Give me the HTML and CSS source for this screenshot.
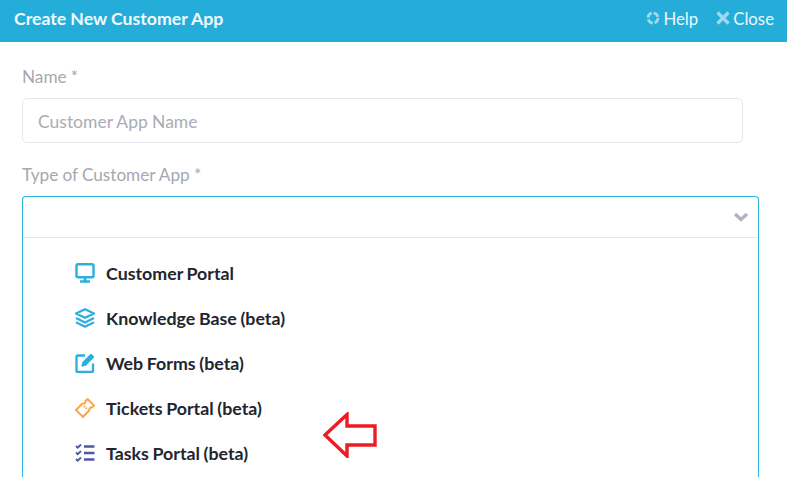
FILE: index.html
```html
<!DOCTYPE html>
<html lang="en">
<head>
<meta charset="utf-8">
<title>Create New Customer App</title>
<link rel="stylesheet" href="styles.css">
</head>
<body>
<div class="modal">
  <header class="bar">
    <h1 class="bar-title">Create New Customer App</h1>
    <div class="bar-actions">
      <span class="bar-action">
        <svg class="bar-icon" viewBox="0 0 14 14"><circle cx="7" cy="7" r="5" fill="none" stroke="#9fd9ee" stroke-width="2.8" stroke-dasharray="6 1.850"/></svg>Help</span>
      <span class="bar-action">
        <svg class="bar-icon" viewBox="0 0 14 14"><path d="M1.500 1.500l11 11M12.500 1.500l-11 11" fill="none" stroke="#9fd9ee" stroke-width="3.200"/></svg>Close</span>
    </div>
  </header>
  <main class="body">
    <label class="label">Name *</label>
    <div class="input">Customer App Name</div>
    <label class="label label-type">Type of Customer App *</label>
    <div class="select">
      <div class="select-control">
        <svg class="chevron" viewBox="0 0 16 10"><path d="M2 2l6 5.500L14 2" fill="none" stroke="#b0b4c0" stroke-width="3.400"/></svg>
      </div>
      <ul class="options">
        <li class="option">
          <svg class="opt-icon" viewBox="0 0 20 20" fill="none" stroke="#2cafdc" stroke-width="2.400"><rect x="1.500" y="1.200" width="17" height="13" rx="1.500"/><path d="M10 15v3M5 18.500h10" stroke-width="2.600"/></svg>
          <span class="opt-text">Customer Portal</span></li>
        <li class="option">
          <svg class="opt-icon" viewBox="0 0 20 20" fill="none" stroke="#2cafdc" stroke-width="2.200" stroke-linejoin="round"><path d="M10 1.200L19 5.500 10 9.800 1 5.500z"/><path d="M1 10l9 4.400 9-4.400M1 14.300l9 4.400 9-4.400"/></svg>
          <span class="opt-text">Knowledge Base (beta)</span></li>
        <li class="option">
          <svg class="opt-icon" viewBox="0 0 20 20" fill="none" stroke="#2cafdc" stroke-width="2.300"><path d="M10 2.500H2.500a1 1 0 0 0-1 1V18a1 1 0 0 0 1 1H17a1 1 0 0 0 1-1v-7.500"/><path d="M16 1.500l2.500 2.500-8 8-3.300.800.800-3.300z" fill="#2cafdc" stroke-width="1.500" stroke-linejoin="round"/></svg>
          <span class="opt-text">Web Forms (beta)</span></li>
        <li class="option">
          <svg class="opt-icon" viewBox="0 0 20 20" fill="none" stroke="#f7a94f" stroke-width="2.100"><path d="M12.500 1L19 7.500l-2 2a2 2 0 0 0-2.500 2.500L8 19l-7-7 6.500-6.500A2 2 0 0 0 10.300 3.200z" stroke-linejoin="round"/><path d="M9 8l3 3" stroke-dasharray="1.500 1"/></svg>
          <span class="opt-text">Tickets Portal (beta)</span></li>
        <li class="option">
          <svg class="opt-icon" viewBox="0 0 20 20" fill="none" stroke="#4a5aa8" stroke-width="2.400"><path d="M1 3l1.700 1.700L6 1.500M1 9.500l1.700 1.700L6 8M1 16l1.700 1.700L6 14.500" stroke-width="1.900"/><path d="M9 3.500h10.500M9 10h10.500M9 16.500h10.500"/></svg>
          <span class="opt-text">Tasks Portal (beta)</span></li>
      </ul>
    </div>
    <svg class="arrow" viewBox="0 0 54 46"><path d="M2 23L24 2.500V14H52V33H24V44z" fill="#fff" stroke="#ec1c24" stroke-width="3.400"/></svg>
  </main>
</div>
</body>
</html>
```
FILE: styles.css
```css
* { box-sizing: border-box; }
html, body { margin: 0; height: 100%; overflow: hidden; background: #fff; }
body { font-family: Lato, "Open Sans", sans-serif; }
.modal { width: 787px; height: 477px; overflow: hidden; display: flex; flex-direction: column; }
.bar { height: 42px; flex: none; background: #25add9; display: flex; align-items: center; justify-content: space-between; padding: 0 13px 6px 14px; color: #fff; }
.bar-title { margin: 0; font-size: 17.700px; font-weight: 700; color: #f2fafd; word-spacing: -0.200px; }
.bar-actions { display: flex; gap: 18px; }
.bar-action { display: flex; align-items: center; gap: 3px; font-size: 16.800px; color: #eaf7fb; }
.bar-icon { width: 14px; height: 14px; }
.body { position: relative; flex: 1; padding: 25px 29px 0 22px; min-height: 0; }
.label { display: block; font-size: 17.200px; line-height: 20px; color: #a5a8b0; word-spacing: -0.200px; }
.input { width: 721px; height: 45px; margin-top: 11px; border: 1px solid #e6e6ee; border-radius: 5px; padding: 2px 15px 0; display: flex; align-items: center; font-size: 17.500px; color: #a9acb4; word-spacing: -0.200px; }
.label-type { margin-top: 22px; }
.select { width: 737px; height: 300px; margin-top: 11px; border: 1px solid #2cb5dd; border-bottom: 0; border-radius: 4px 4px 0 0; }
.select-control { height: 41px; border-bottom: 1px solid #e6e6ee; display: flex; align-items: center; justify-content: flex-end; padding-right: 9px; }
.chevron { width: 16px; height: 10px; }
.options { list-style: none; margin: 0; padding: 12px 0 0 52px; }
.option { height: 45px; display: flex; align-items: center; gap: 11px; font-size: 17.800px; font-weight: 700; color: #22252e; word-spacing: -0.700px; }
.opt-text { padding-top: 1px; }
.opt-icon { width: 20px; height: 20px; flex: none; }
.arrow { position: absolute; left: 323px; top: 370px; width: 54px; height: 46px; }
```
